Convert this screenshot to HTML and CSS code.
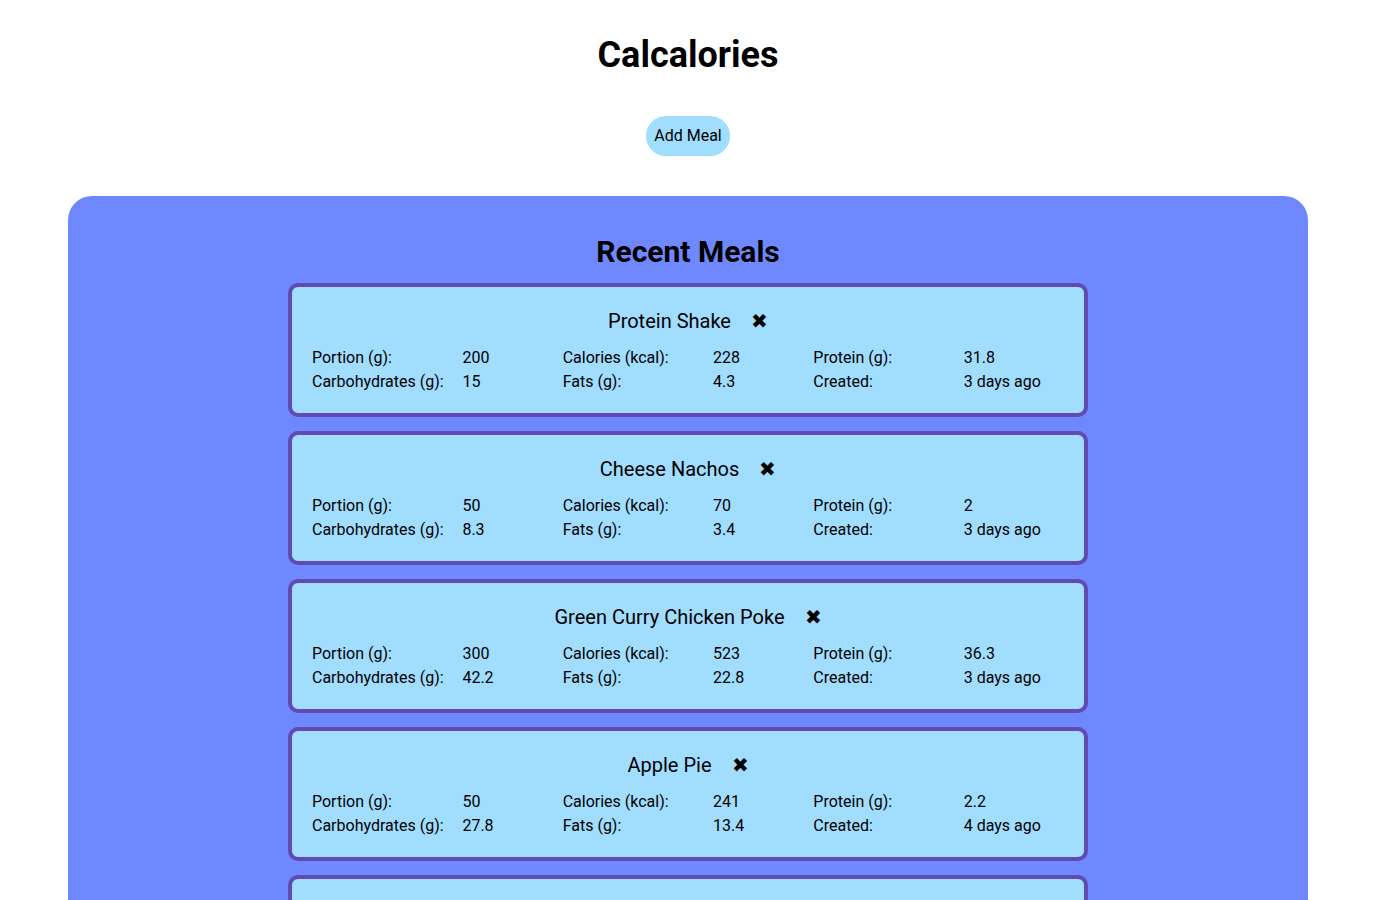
FILE: index.html
```html
<!DOCTYPE html>
<html lang="en">
<head>
    <meta charset="UTF-8">
    <meta name="viewport" content="width=device-width, initial-scale=1.0">
    <title>Calcalories</title>
    <link rel="stylesheet" href="styles.css">
</head>
<body>
    <h1 class="app-title">Calcalories</h1>
    <div class="actions">
        <button type="button" class="add-btn">Add Meal</button>
    </div>

    <section class="meals-panel">
        <h2 class="panel-title">Recent Meals</h2>

        <div class="meal-card">
            <div class="meal-head">
                <span class="meal-name">Protein Shake</span>
                <span class="meal-delete">&#10006;</span>
            </div>
            <div class="meal-stats">
                <span>Portion (g):</span><span>200</span>
                <span>Calories (kcal):</span><span>228</span>
                <span>Protein (g):</span><span>31.8</span>
                <span>Carbohydrates (g):</span><span>15</span>
                <span>Fats (g):</span><span>4.3</span>
                <span>Created:</span><span>3 days ago</span>
            </div>
        </div>

        <div class="meal-card">
            <div class="meal-head">
                <span class="meal-name">Cheese Nachos</span>
                <span class="meal-delete">&#10006;</span>
            </div>
            <div class="meal-stats">
                <span>Portion (g):</span><span>50</span>
                <span>Calories (kcal):</span><span>70</span>
                <span>Protein (g):</span><span>2</span>
                <span>Carbohydrates (g):</span><span>8.3</span>
                <span>Fats (g):</span><span>3.4</span>
                <span>Created:</span><span>3 days ago</span>
            </div>
        </div>

        <div class="meal-card">
            <div class="meal-head">
                <span class="meal-name">Green Curry Chicken Poke</span>
                <span class="meal-delete">&#10006;</span>
            </div>
            <div class="meal-stats">
                <span>Portion (g):</span><span>300</span>
                <span>Calories (kcal):</span><span>523</span>
                <span>Protein (g):</span><span>36.3</span>
                <span>Carbohydrates (g):</span><span>42.2</span>
                <span>Fats (g):</span><span>22.8</span>
                <span>Created:</span><span>3 days ago</span>
            </div>
        </div>

        <div class="meal-card">
            <div class="meal-head">
                <span class="meal-name">Apple Pie</span>
                <span class="meal-delete">&#10006;</span>
            </div>
            <div class="meal-stats">
                <span>Portion (g):</span><span>50</span>
                <span>Calories (kcal):</span><span>241</span>
                <span>Protein (g):</span><span>2.2</span>
                <span>Carbohydrates (g):</span><span>27.8</span>
                <span>Fats (g):</span><span>13.4</span>
                <span>Created:</span><span>4 days ago</span>
            </div>
        </div>

        <div class="meal-card">
            <div class="meal-head">
                <span class="meal-name">Chicken Caesar Salad</span>
                <span class="meal-delete">&#10006;</span>
            </div>
            <div class="meal-stats">
                <span>Portion (g):</span><span>250</span>
                <span>Calories (kcal):</span><span>312</span>
                <span>Protein (g):</span><span>24.5</span>
                <span>Carbohydrates (g):</span><span>10.1</span>
                <span>Fats (g):</span><span>19.6</span>
                <span>Created:</span><span>5 days ago</span>
            </div>
        </div>
    </section>
</body>
</html>
```

FILE: styles.css
```css
body {
    font-family: Roboto, 'Noto Sans', sans-serif;
    margin: 8px 16px 8px 8px;
    color: #000;
    background: #fff;
}
.app-title {
    text-align: center;
    font-size: 36px;
    font-weight: 700;
    margin: 26px 0 0;
}
.actions {
    display: flex;
    justify-content: center;
    margin: 40px 0 40px;
}
.add-btn {
    font-family: inherit;
    font-size: 16px;
    color: #000;
    background-color: #a0ddfe;
    border: none;
    border-radius: 20px;
    padding: 11px 8px;
    line-height: 18px;
    cursor: pointer;
}
.meals-panel {
    background-color: #6f88ff;
    border-radius: 24px;
    margin: 0 60px;
    padding: 38px 0 20px;
    display: flex;
    flex-direction: column;
    align-items: center;
}
.panel-title {
    font-size: 30px;
    font-weight: 700;
    margin: 0 0 14px;
}
.meal-card {
    width: 752px;
    background-color: #a0ddfe;
    border: 4px solid #604cae;
    border-radius: 10px;
    padding: 21px 20px 19px;
    margin-bottom: 14px;
}
.meal-head {
    display: flex;
    justify-content: center;
    align-items: center;
    gap: 20px;
    line-height: 26px;
    margin-bottom: 12px;
}
.meal-name {
    font-size: 20px;
}
.meal-delete {
    font-size: 20px;
    cursor: pointer;
}
.meal-stats {
    display: grid;
    grid-template-columns: 3fr 2fr 3fr 2fr 3fr 2fr;
    font-size: 16px;
    line-height: 24px;
}
```
